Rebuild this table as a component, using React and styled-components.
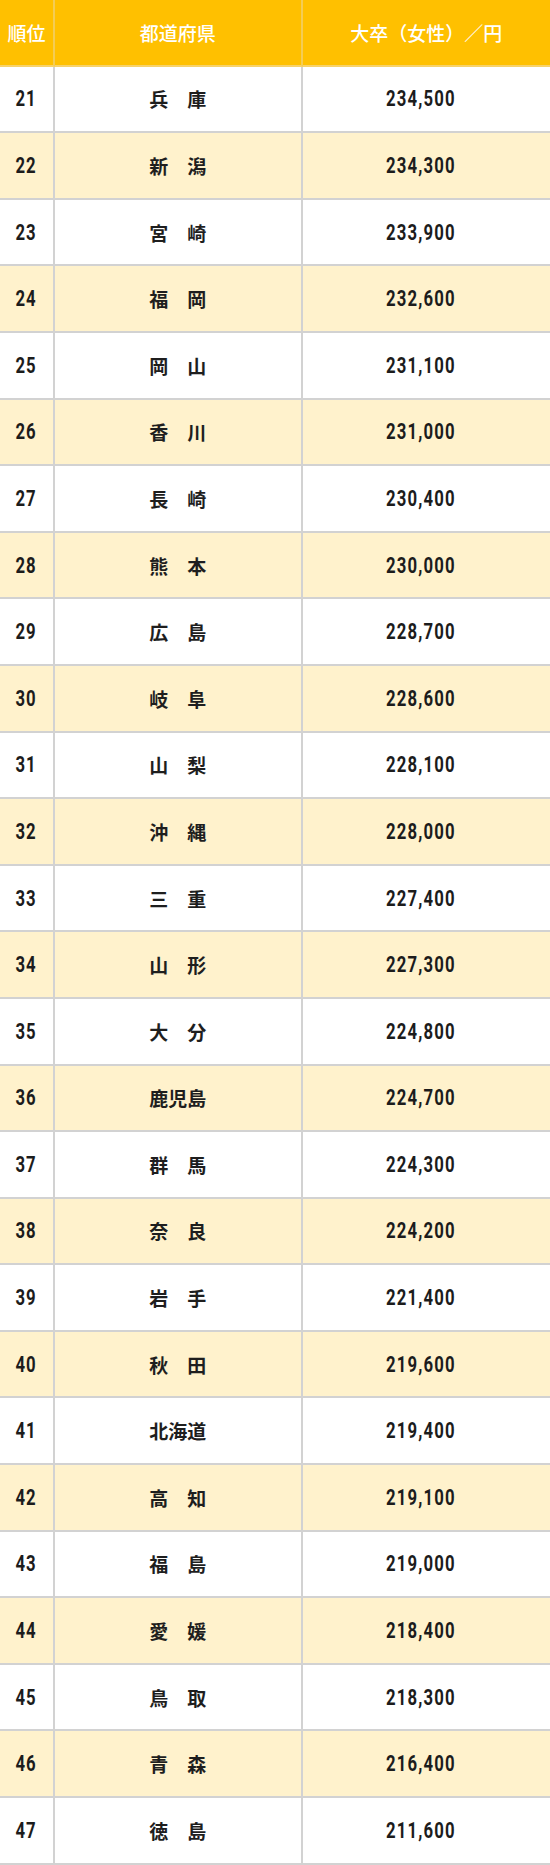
import styled, { createGlobalStyle } from 'styled-components';

const rows = [
    [21, '兵　庫', '234,500'],
    [22, '新　潟', '234,300'],
    [23, '宮　崎', '233,900'],
    [24, '福　岡', '232,600'],
    [25, '岡　山', '231,100'],
    [26, '香　川', '231,000'],
    [27, '長　崎', '230,400'],
    [28, '熊　本', '230,000'],
    [29, '広　島', '228,700'],
    [30, '岐　阜', '228,600'],
    [31, '山　梨', '228,100'],
    [32, '沖　縄', '228,000'],
    [33, '三　重', '227,400'],
    [34, '山　形', '227,300'],
    [35, '大　分', '224,800'],
    [36, '鹿児島', '224,700'],
    [37, '群　馬', '224,300'],
    [38, '奈　良', '224,200'],
    [39, '岩　手', '221,400'],
    [40, '秋　田', '219,600'],
    [41, '北海道', '219,400'],
    [42, '高　知', '219,100'],
    [43, '福　島', '219,000'],
    [44, '愛　媛', '218,400'],
    [45, '鳥　取', '218,300'],
    [46, '青　森', '216,400'],
    [47, '徳　島', '211,600'],
];

function App() {
    return (
        <>
            <GlobalStyle />
            <Table>
                <HeadCell>順位</HeadCell>
                <HeadCell>都道府県</HeadCell>
                <HeadCell $last>大卒（女性）／円</HeadCell>
                {rows.map(([rank, pref, salary], i) => {
                    const shaded = i % 2 === 1;
                    return (
                        <Row key={rank}>
                            <Cell $shaded={shaded}>
                                <Num>{rank}</Num>
                            </Cell>
                            <Cell $shaded={shaded}>
                                <Pref>{pref}</Pref>
                            </Cell>
                            <Cell $shaded={shaded} $last>
                                <Num>{salary}</Num>
                            </Cell>
                        </Row>
                    );
                })}
            </Table>
        </>
    );
}

export default App;

const GlobalStyle = createGlobalStyle`
    * {
        box-sizing: border-box;
    }
    body {
        margin: 0;
        background: #fff;
        font-family: 'Noto Sans CJK JP', 'Noto Sans', sans-serif;
    }
`;

const Table = styled.div`
    width: 550px;
    display: grid;
    grid-template-columns: 55px 1fr 1fr;
    grid-auto-rows: calc(1865px / 28);
`;

const Row = styled.div`
    display: contents;
`;

const HeadCell = styled.div`
    display: flex;
    align-items: center;
    justify-content: center;
    background: #ffc000;
    color: #fff;
    font-size: 19px;
    font-weight: 500;
    border-right: ${(p) => (p.$last ? 'none' : '2px solid #f4cc55')};
    border-bottom: 2px solid #f7d26a;
    white-space: nowrap;
`;

const Cell = styled.div`
    display: flex;
    align-items: center;
    justify-content: center;
    padding-right: ${(p) => (p.$last ? '10px' : '0')};
    background: ${(p) => (p.$shaded ? '#fff2cc' : '#fff')};
    border-right: ${(p) => (p.$last ? 'none' : '2px solid #d2d2d2')};
    border-bottom: 2px solid #d2d2d2;
    color: #222;
`;

const Num = styled.span`
    display: inline-block;
    font-family: Roboto, 'Liberation Sans', sans-serif;
    font-size: 22px;
    font-weight: 700;
    letter-spacing: 1.5px;
    transform: scaleX(0.76);
    color: #1c1c1c;
`;

const Pref = styled.span`
    font-size: 19px;
    font-weight: 700;
    color: #1e1e1e;
`;
